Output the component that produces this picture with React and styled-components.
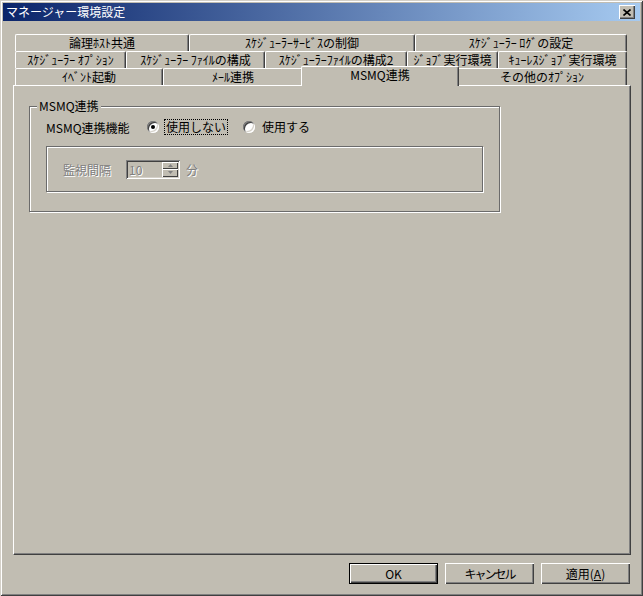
import React from 'react'
import styled, { createGlobalStyle } from 'styled-components'

const FACE = '#c1bdb2'

const GlobalStyle = createGlobalStyle`
  html, body {
    margin: 0;
    padding: 0;
    background: ${FACE};
  }
  * {
    box-sizing: border-box;
  }
`

const Window = styled.div`
  width: 643px;
  height: 596px;
  padding: 3px;
  display: flex;
  flex-direction: column;
  background: ${FACE};
  font-family: "Noto Sans CJK JP", "Liberation Sans", sans-serif;
  font-size: 12px;
  color: #000;
  box-shadow: inset 1px 1px #d4d0c8, inset -1px -1px #404040,
    inset 2px 2px #fff, inset -2px -2px #808080;
`

const TitleBar = styled.div`
  height: 18px;
  display: flex;
  align-items: center;
  justify-content: space-between;
  padding: 0 5px 0 3px;
  background: linear-gradient(to right, #0a246a, #a6caf0);
  color: #fff;
  line-height: 18px;
  white-space: nowrap;
`

const CloseButton = styled.div`
  width: 16px;
  height: 14px;
  display: flex;
  align-items: center;
  justify-content: center;
  background: ${FACE};
  box-shadow: inset 1px 1px #fff, inset -1px -1px #404040, inset -2px -2px #808080;
`

const Body = styled.div`
  flex: 1;
  display: flex;
  flex-direction: column;
  padding: 13px 9px 9px 10px;
`

const TabStrip = styled.div`
  margin: 0 4px 0 2px;
  display: flex;
  flex-direction: column;
`

const TabRow = styled.div`
  display: flex;
  height: 17px;
`

const Tab = styled.div`
  position: relative;
  flex: 0 0 ${p => p.$w + (p.$active ? 4 : 0)}px;
  height: ${p => (p.$active ? 20 : 17)}px;
  margin: ${p => (p.$active ? '-2px -2px -1px -2px' : '0')};
  z-index: ${p => (p.$active ? 2 : 1)};
  background: ${FACE};
  border-top: 1px solid #fff;
  border-left: 1px solid #fff;
  border-right: 1px solid #404040;
  border-radius: 2px 2px 0 0;
  box-shadow: inset -1px 0 #808080;
  text-align: center;
  line-height: 15px;
  white-space: nowrap;
  overflow: hidden;
`

const Panel = styled.div`
  flex: 1;
  padding: 20px 0 0 15px;
  border-top: 1px solid #fff;
  border-left: 1px solid #fff;
  border-right: 1px solid #404040;
  border-bottom: 1px solid #404040;
  box-shadow: inset -1px -1px #808080;
`

const GroupBox = styled.div`
  position: relative;
  width: 471px;
  padding: 12px 16px 19px 16px;
  border: 1px solid #6b6b6b;
  box-shadow: 1px 1px 0 #fff, inset 1px 1px 0 #fff;
`

const Caption = styled.span`
  position: absolute;
  left: 7px;
  top: -8px;
  padding: 0 2px;
  line-height: 14px;
  background: ${FACE};
`

const Row = styled.div`
  display: flex;
  align-items: center;
  height: 16px;
`

const FieldLabel = styled.span`
  width: ${p => p.$w}px;
  flex: 0 0 auto;
  white-space: nowrap;
  color: ${p => (p.$disabled ? '#808080' : '#000')};
  text-shadow: ${p => (p.$disabled ? '1px 1px 0 #fff' : 'none')};
`

const RadioOption = styled.label`
  display: flex;
  align-items: center;
  min-width: ${p => p.$w}px;
  gap: 6px;
`

const RadioDot = styled.span`
  position: relative;
  width: 12px;
  height: 12px;
  border-radius: 50%;
  background: #fff;
  box-shadow: inset 1px 1px #808080, inset -1px -1px #fff,
    inset 2px 2px #404040, inset -2px -2px #d4d0c8;
  &::after {
    content: '';
    display: ${p => (p.$checked ? 'block' : 'none')};
    position: absolute;
    left: 4px;
    top: 4px;
    width: 4px;
    height: 4px;
    border-radius: 50%;
    background: #000;
  }
`

const RadioText = styled.span`
  line-height: 14px;
  padding: 0 1px;
  outline: ${p => (p.$focus ? '1px dotted #000' : 'none')};
  white-space: nowrap;
`

const InnerBox = styled.div`
  margin-top: 11px;
  height: 46px;
  display: flex;
  align-items: center;
  padding-left: 16px;
  border: 1px solid #6b6b6b;
  box-shadow: 1px 1px 0 #fff, inset 1px 1px 0 #fff;
`

const Spin = styled.div`
  width: 54px;
  height: 19px;
  display: flex;
  padding: 2px;
  box-shadow: inset 1px 1px #808080, inset -1px -1px #fff,
    inset 2px 2px #404040, inset -2px -2px #d4d0c8;
`

const SpinText = styled.span`
  flex: 1;
  line-height: 15px;
  padding-left: 1px;
  color: #808080;
  text-shadow: 1px 1px 0 #fff;
`

const SpinButtons = styled.div`
  width: 16px;
  display: flex;
  flex-direction: column;
`

const SpinButton = styled.div`
  flex: 1;
  display: flex;
  align-items: center;
  justify-content: center;
  background: ${FACE};
  box-shadow: inset 1px 1px #fff, inset -1px -1px #404040;
`

const Unit = styled.span`
  margin-left: 6px;
  color: #808080;
  text-shadow: 1px 1px 0 #fff;
`

const ButtonBar = styled.div`
  margin-top: 8px;
  display: flex;
  justify-content: flex-end;
  gap: 7px;
  padding-right: 1px;
`

const Button = styled.div`
  width: 89px;
  height: 21px;
  display: flex;
  align-items: center;
  justify-content: center;
  background: ${FACE};
  border: ${p => (p.$default ? '1px solid #000' : 'none')};
  box-shadow: inset 1px 1px #fff, inset -1px -1px #404040, inset -2px -2px #808080;
  white-space: nowrap;
  letter-spacing: ${p => (p.$tight ? '-2px' : '0')};
`

const tabRows = [
  [
    { label: '論理ﾎｽﾄ共通', w: 174 },
    { label: 'ｽｹｼﾞｭｰﾗｰｻｰﾋﾞｽの制御', w: 226 },
    { label: 'ｽｹｼﾞｭｰﾗｰ ﾛｸﾞの設定', w: 212 },
  ],
  [
    { label: 'ｽｹｼﾞｭｰﾗｰ ｵﾌﾟｼｮﾝ', w: 111 },
    { label: 'ｽｹｼﾞｭｰﾗｰ ﾌｧｲﾙの構成', w: 139 },
    { label: 'ｽｹｼﾞｭｰﾗｰﾌｧｲﾙの構成2', w: 142 },
    { label: 'ｼﾞｮﾌﾞ実行環境', w: 91 },
    { label: 'ｷｭｰﾚｽｼﾞｮﾌﾞ実行環境', w: 129 },
  ],
  [
    { label: 'ｲﾍﾞﾝﾄ起動', w: 148 },
    { label: 'ﾒｰﾙ連携', w: 140 },
    { label: 'MSMQ連携', w: 154, active: true },
    { label: 'その他のｵﾌﾟｼｮﾝ', w: 170 },
  ],
]

function Arrow({ up }) {
  return (
    <svg width="5" height="3" viewBox="0 0 5 3">
      <path d={up ? 'M2.5 0 L5 3 L0 3 Z' : 'M0 0 L5 0 L2.5 3 Z'} fill="#808080" />
    </svg>
  )
}

export default function App() {
  return (
    <>
      <GlobalStyle />
      <Window>
        <TitleBar>
          <span>マネージャー環境設定</span>
          <CloseButton>
            <svg width="8" height="7" viewBox="0 0 8 7">
              <path d="M0.5 0.5 L7.5 6.5 M7.5 0.5 L0.5 6.5" stroke="#000" strokeWidth="1.6" />
            </svg>
          </CloseButton>
        </TitleBar>
        <Body>
          <TabStrip>
            {tabRows.map((row, i) => (
              <TabRow key={i}>
                {row.map(t => (
                  <Tab key={t.label} $w={t.w} $active={t.active}>
                    {t.label}
                  </Tab>
                ))}
              </TabRow>
            ))}
          </TabStrip>
          <Panel>
            <GroupBox>
              <Caption>MSMQ連携</Caption>
              <Row>
                <FieldLabel $w={101}>MSMQ連携機能</FieldLabel>
                <RadioOption $w={96}>
                  <RadioDot $checked />
                  <RadioText $focus>使用しない</RadioText>
                </RadioOption>
                <RadioOption>
                  <RadioDot />
                  <RadioText>使用する</RadioText>
                </RadioOption>
              </Row>
              <InnerBox>
                <FieldLabel $w={63} $disabled>監視間隔</FieldLabel>
                <Spin>
                  <SpinText>10</SpinText>
                  <SpinButtons>
                    <SpinButton><Arrow up /></SpinButton>
                    <SpinButton><Arrow /></SpinButton>
                  </SpinButtons>
                </Spin>
                <Unit>分</Unit>
              </InnerBox>
            </GroupBox>
          </Panel>
          <ButtonBar>
            <Button $default>OK</Button>
            <Button $tight>キャンセル</Button>
            <Button>適用(<u>A</u>)</Button>
          </ButtonBar>
        </Body>
      </Window>
    </>
  )
}
